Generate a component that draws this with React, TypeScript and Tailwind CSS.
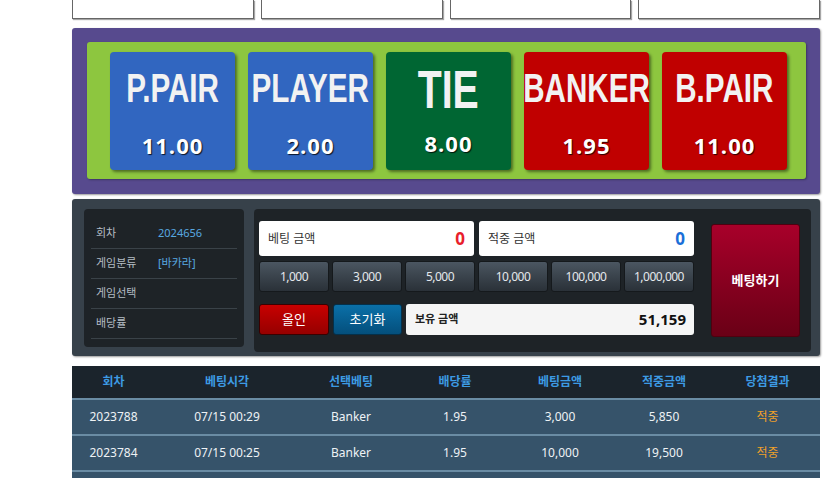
import React from 'react';

const font = { fontFamily: '"Noto Sans", "Noto Sans CJK KR", sans-serif' };

const cards = [
  { name: 'P.PAIR', odds: '11.00', bg: 'bg-[#3166c0]', big: false },
  { name: 'PLAYER', odds: '2.00', bg: 'bg-[#3166c0]', big: false },
  { name: 'TIE', odds: '8.00', bg: 'bg-[#006633]', big: true },
  { name: 'BANKER', odds: '1.95', bg: 'bg-[#c00000]', big: false },
  { name: 'B.PAIR', odds: '11.00', bg: 'bg-[#c00000]', big: false },
];

const chips = ['1,000', '3,000', '5,000', '10,000', '100,000', '1,000,000'];

const info = [
  { label: '회차', value: '2024656' },
  { label: '게임분류', value: '[바카라]' },
  { label: '게임선택', value: '' },
  { label: '배당률', value: '' },
];

const history = [
  ['2023788', '07/15 00:29', 'Banker', '1.95', '3,000', '5,850', '적중'],
  ['2023784', '07/15 00:25', 'Banker', '1.95', '10,000', '19,500', '적중'],
  ['', '', '', '', '', '', ''],
];

const heads = ['회차', '베팅시각', '선택베팅', '배당률', '베팅금액', '적중금액', '당첨결과'];
const cols = 'grid grid-cols-[83px_144px_104px_104px_106px_102px_1fr]';

const App: React.FC = () => {
  return (
    <div className="w-[835px] h-[478px] overflow-hidden bg-white" style={font}>
      <div className="ml-[72px] w-[748px]">
        {/* top boxes */}
        <div className="grid grid-cols-4 gap-[7px]">
          {[0, 1, 2, 3].map((i) => (
            <div key={i} className="h-[19px] bg-white border border-[#666] border-t-0 shadow-[1px_1px_1px_rgba(0,0,0,0.35)]"></div>
          ))}
        </div>

        {/* bet board */}
        <div className="mt-[9px] h-[166px] bg-[#574a8e] rounded-[3px] pt-[14px] pl-[15px] pr-[14px] shadow-[1px_1px_2px_rgba(0,0,0,0.4)]">
          <div className="h-[137px] bg-[#8dc63f] rounded-[3px] pt-[10px] pl-[23px] flex gap-[13px] shadow-[1px_1px_2px_rgba(0,0,0,0.3)]">
            {cards.map((c) => (
              <div
                key={c.name}
                className={`${c.bg} w-[125px] h-[118px] rounded-[4px] flex flex-col items-center shadow-[2px_2px_3px_rgba(0,0,0,0.45)]`}
              >
                <div
                  className={`text-[#f2f2f2] font-bold leading-none whitespace-nowrap scale-x-[0.74] ${c.big ? 'text-[53px] mt-[11px]' : 'text-[40px] mt-[16px]'}`}
                  style={{ fontFamily: '"Liberation Sans", Arial, sans-serif' }}
                >
                  {c.name}
                </div>
                <div
                  className={`text-white font-bold text-[22px] leading-none tracking-[1px] ${c.big ? 'mt-[16px]' : 'mt-[26px]'} [text-shadow:1px_1px_1px_rgba(0,0,0,0.8)]`}
                  style={{ fontFamily: '"Open Sans", "Noto Sans", sans-serif' }}
                >
                  {c.odds}
                </div>
              </div>
            ))}
          </div>
        </div>

        {/* bet panel */}
        <div className="mt-[5px] h-[157px] bg-[#37414a] rounded-[3px] pl-[12px] pt-[10px] pr-[9px] flex gap-[10px] shadow-[1px_1px_2px_rgba(0,0,0,0.4)]">
          <div className="w-[160px] h-[138px] bg-[#1e2327] rounded-[4px] px-[7px] pt-[10px]">
            {info.map((r) => (
              <div key={r.label} className="h-[30px] border-b border-[#3a4248] flex items-center text-[11px]">
                <span className="w-[67px] pl-[5px] text-[#b4bcc4]">{r.label}</span>
                <span className="text-[#58a8e0]">{r.value}</span>
              </div>
            ))}
          </div>

          <div className="w-[557px] h-[143px] bg-[#1e2327] rounded-[4px] pl-[5px] pr-[10px] pt-[12px] flex gap-[17px]">
            <div className="w-[435px] flex flex-col">
              <div className="flex gap-[5px]">
                <div className="flex-1 h-[35px] bg-white rounded-[3px] flex items-center justify-between px-[9px]">
                  <span className="text-[12px] text-[#333]">베팅 금액</span>
                  <span className="text-[17px] font-bold text-[#e8202a]">0</span>
                </div>
                <div className="flex-1 h-[35px] bg-white rounded-[3px] flex items-center justify-between px-[9px]">
                  <span className="text-[12px] text-[#333]">적중 금액</span>
                  <span className="text-[17px] font-bold text-[#1a6fd8]">0</span>
                </div>
              </div>
              <div className="mt-[5px] grid grid-cols-6 gap-[3px]">
                {chips.map((c) => (
                  <div
                    key={c}
                    className="h-[31px] rounded-[3px] border border-[#15191c] bg-gradient-to-b from-[#4b5661] to-[#2a3138] flex items-center justify-center text-[12px] text-[#e4e8ec] tracking-[-0.5px]"
                  >
                    {c}
                  </div>
                ))}
              </div>
              <div className="mt-[12px] flex gap-[4px]">
                <div className="w-[70px] h-[31px] rounded-[3px] border border-[#3a0000] bg-gradient-to-b from-[#c80000] to-[#960000] flex items-center justify-center text-[13px] text-white">
                  올인
                </div>
                <div className="w-[69px] h-[31px] rounded-[3px] border border-[#04304a] bg-gradient-to-b from-[#0b70a8] to-[#044f7c] flex items-center justify-center text-[13px] text-white">
                  초기화
                </div>
                <div className="flex-1 h-[31px] rounded-[3px] bg-[#f5f5f5] flex items-center justify-between pl-[9px] pr-[8px]">
                  <span className="text-[11px] font-bold text-[#222]">보유 금액</span>
                  <span className="text-[15px] font-bold text-[#111]">51,159</span>
                </div>
              </div>
            </div>
            <div className="mt-[3px] w-[89px] h-[113px] rounded-[3px] bg-gradient-to-b from-[#a8002a] to-[#6a0016] border border-[#50000f] flex items-center justify-center text-[13px] font-bold text-white">
              베팅하기
            </div>
          </div>
        </div>

        {/* history */}
        <div className="mt-[10px] text-[12px]">
          <div className={`${cols} h-[32px] bg-[#1b242c] items-center text-center font-bold text-[#3d9be4]`}>
            {heads.map((h) => (
              <div key={h}>{h}</div>
            ))}
          </div>
          {history.map((r, i) => (
            <div key={i} className={`${cols} h-[36px] bg-[#36536a] border-t-2 border-[#6a8ca4] items-center text-center text-[#eef2f5]`}>
              {r.map((v, j) => (
                <div key={j} className={j === 6 ? 'text-[#f0a028]' : ''}>
                  {v}
                </div>
              ))}
            </div>
          ))}
        </div>
      </div>
    </div>
  );
};

export default App;
